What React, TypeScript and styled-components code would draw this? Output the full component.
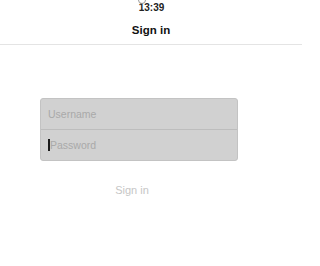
import React from "react";
import styled, { createGlobalStyle } from "styled-components";

const Global = createGlobalStyle`
  html, body { margin: 0; padding: 0; background: #ffffff; }
  body { font-family: "Liberation Sans", Arial, sans-serif; }
`;

const Page = styled.div`
  width: 302px;
  height: 266px;
  background: #fff;
  display: flex;
  flex-direction: column;
  overflow: hidden;
`;

const StatusBar = styled.div`
  height: 13px;
  display: flex;
  justify-content: center;
  align-items: flex-end;
  position: relative;
  font-size: 10px;
  font-weight: 600;
  color: #222;
  line-height: 10px;
  padding-left: 1px;
`;

const Ring = styled.span`
  position: absolute;
  top: -4px;
  left: 138px;
  width: 6px;
  height: 6px;
  border: 1px solid #9a9a9a;
  border-radius: 50%;
`;

const NavBar = styled.div`
  height: 32px;
  box-sizing: border-box;
  display: flex;
  align-items: center;
  justify-content: center;
  border-bottom: 1px solid #e4e4e4;
  font-size: 11.5px;
  font-weight: 700;
  color: #111;
  padding-top: 3px;
`;

const Content = styled.div`
  display: flex;
  flex-direction: column;
  padding: 53px 0 0 40px;
`;

const Fields = styled.div`
  width: 196px;
  background: #d1d1d1;
  border: 1px solid #c3c3c3;
  border-radius: 3px;
  display: flex;
  flex-direction: column;
`;

const Field = styled.div<{ $divider?: boolean }>`
  height: 30px;
  display: flex;
  align-items: center;
  padding-left: 7px;
  font-size: 10.5px;
  color: #a9a9a9;
  border-bottom: ${(p) => (p.$divider ? "1px solid #bdbdbd" : "none")};
`;

const Caret = styled.span`
  display: inline-block;
  width: 2px;
  height: 12px;
  background: #1a1a1a;
`;

const Button = styled.div`
  width: 184px;
  margin-top: 23px;
  text-align: center;
  font-size: 11px;
  color: #c6c6c6;
`;

export default function App() {
  return (
    <>
      <Global />
      <Page>
        <StatusBar>
          <Ring />
          13:39
        </StatusBar>
        <NavBar>Sign in</NavBar>
        <Content>
          <Fields>
            <Field $divider>Username</Field>
            <Field>
              <Caret />
              Password
            </Field>
          </Fields>
          <Button>Sign in</Button>
        </Content>
      </Page>
    </>
  );
}
